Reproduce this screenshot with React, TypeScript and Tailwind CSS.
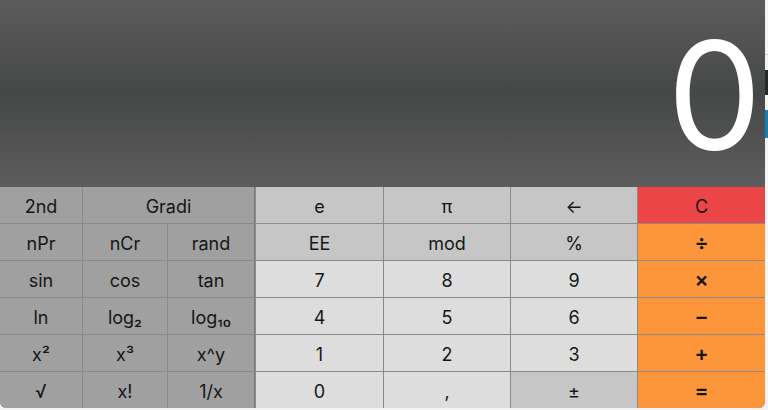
type Key = {
  label: string
  tone: 'fn' | 'op' | 'num' | 'clear' | 'act'
  span?: boolean
  edge?: boolean
}

const TONES = {
  fn: 'bg-[#a0a0a0]',
  op: 'bg-[#c6c6c6]',
  num: 'bg-[#dddddd]',
  clear: 'bg-[#ec4548]',
  act: 'bg-[#fd953a] text-[21px] font-semibold',
}

const KEYS: Key[] = [
  { label: '2nd', tone: 'fn' },
  { label: 'Gradi', tone: 'fn', span: true, edge: true },
  { label: 'e', tone: 'op' },
  { label: 'π', tone: 'op' },
  { label: '←', tone: 'op' },
  { label: 'C', tone: 'clear' },

  { label: 'nPr', tone: 'fn' },
  { label: 'nCr', tone: 'fn' },
  { label: 'rand', tone: 'fn', edge: true },
  { label: 'EE', tone: 'op' },
  { label: 'mod', tone: 'op' },
  { label: '%', tone: 'op' },
  { label: '÷', tone: 'act' },

  { label: 'sin', tone: 'fn' },
  { label: 'cos', tone: 'fn' },
  { label: 'tan', tone: 'fn', edge: true },
  { label: '7', tone: 'num' },
  { label: '8', tone: 'num' },
  { label: '9', tone: 'num' },
  { label: '×', tone: 'act' },

  { label: 'ln', tone: 'fn' },
  { label: 'log₂', tone: 'fn' },
  { label: 'log₁₀', tone: 'fn', edge: true },
  { label: '4', tone: 'num' },
  { label: '5', tone: 'num' },
  { label: '6', tone: 'num' },
  { label: '−', tone: 'act' },

  { label: 'x²', tone: 'fn' },
  { label: 'x³', tone: 'fn' },
  { label: 'x^y', tone: 'fn', edge: true },
  { label: '1', tone: 'num' },
  { label: '2', tone: 'num' },
  { label: '3', tone: 'num' },
  { label: '+', tone: 'act' },

  { label: '√', tone: 'fn' },
  { label: 'x!', tone: 'fn' },
  { label: '1/x', tone: 'fn', edge: true },
  { label: '0', tone: 'num' },
  { label: ',', tone: 'num' },
  { label: '±', tone: 'op' },
  { label: '=', tone: 'act' },
]

export default function App() {
  return (
    <div className="flex h-[410px] w-[768px] bg-[#f4f4f4] font-['Inter','Liberation_Sans',sans-serif]">
      <div className="flex h-[408px] w-[765px] flex-col overflow-hidden rounded-b-[6px] bg-[#8a8a8a]">
        <div className="h-[187px] bg-linear-to-b from-[#5b5b5b] via-[#464847] to-[#5c5c5c] pr-[3px] pt-[21px] text-right text-[150px] leading-none text-white">
          0
        </div>
        <div className="grid grid-cols-[82px_84px_87px_127px_126px_126px_127px] grid-rows-[repeat(6,36px)] gap-px">
          {KEYS.map((k, i) => (
            <button
              key={i}
              className={`flex items-center justify-center pt-[2px] text-[18px] text-[#161616] ${TONES[k.tone]}
                ${k.span ? 'col-span-2' : ''} ${k.edge ? 'border-r border-[#7c7c7c]' : ''}`}
            >
              {k.label}
            </button>
          ))}
        </div>
      </div>
      <div className="flex w-[3px] flex-col">
        <div className="h-[55px] border-b border-[#d0d0d0]" />
        <div className="h-[15px]" />
        <div className="h-[25px] bg-[#262a2c]" />
        <div className="h-[15px]" />
        <div className="h-[28px] bg-[#1b7cb0]" />
      </div>
    </div>
  )
}
